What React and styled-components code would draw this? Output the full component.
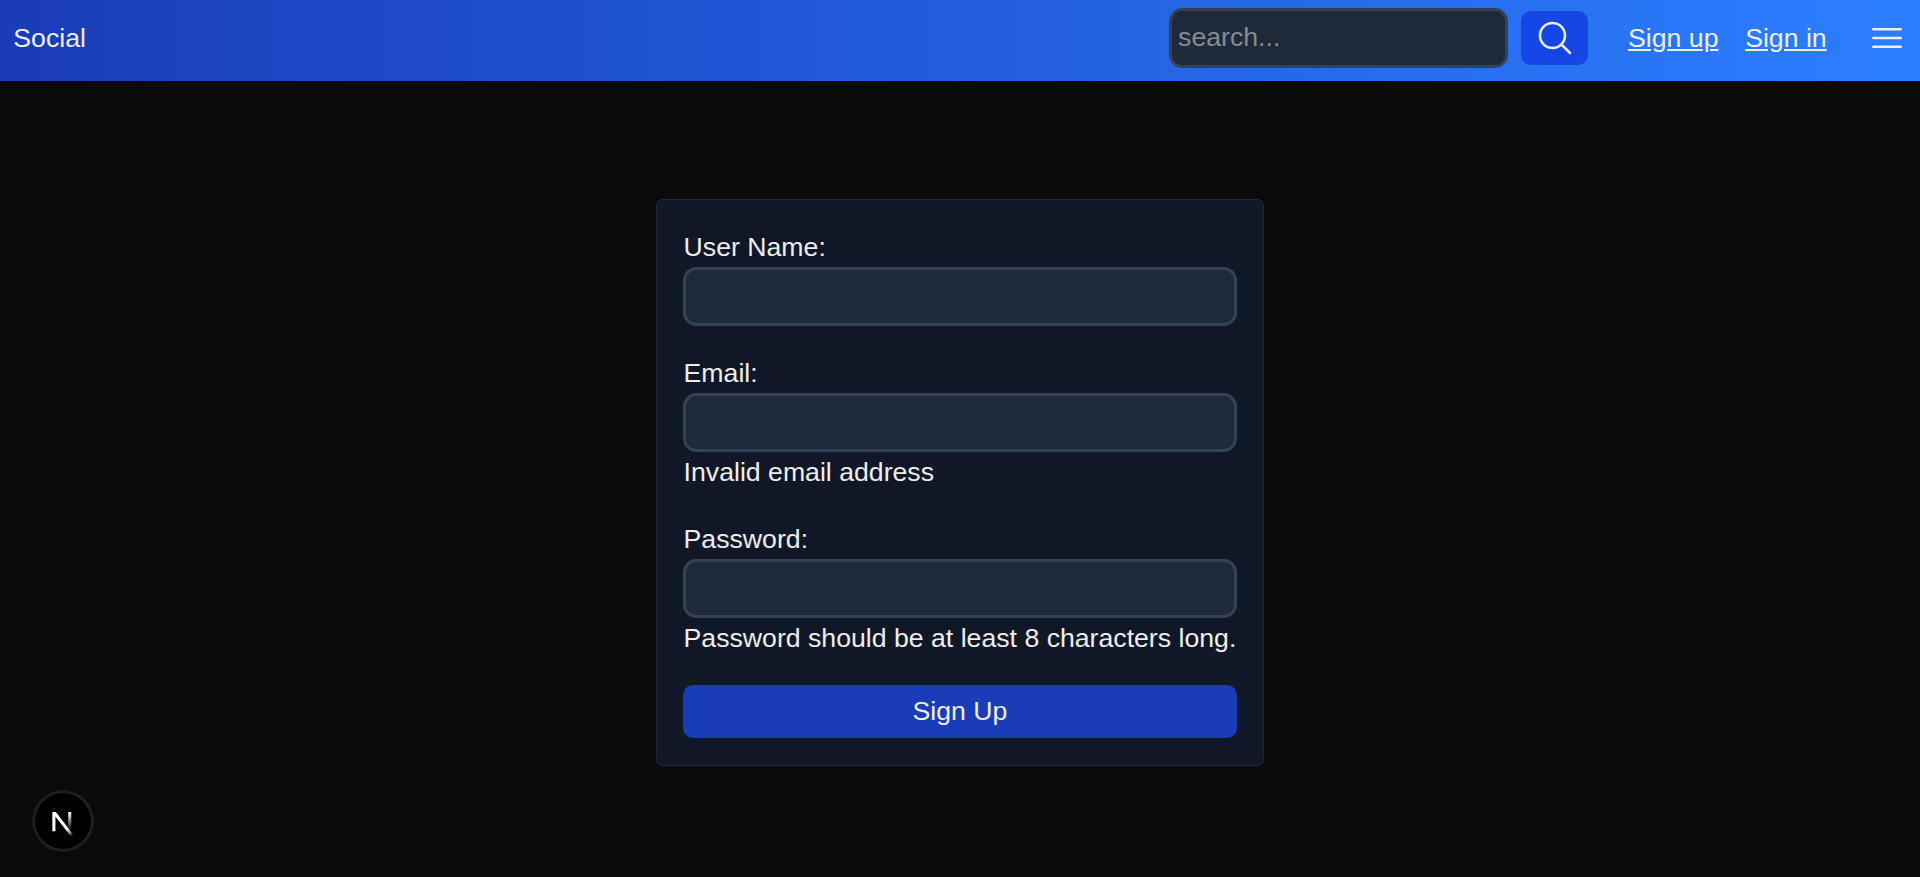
import React from "react";
import styled, { createGlobalStyle } from "styled-components";

const GlobalStyle = createGlobalStyle`
  *, *::before, *::after { box-sizing: border-box; }
  body {
    margin: 0;
    background: #0a0a0a;
    color: #ededed;
    font-family: "Liberation Sans", Arial, Helvetica, sans-serif;
    font-size: 26.667px;
    line-height: 40px;
  }
  input, button { font: inherit; color: inherit; margin: 0; }
`;

const Page = styled.div`
  min-height: 877px;
  display: flex;
  flex-direction: column;
`;

const Header = styled.header`
  height: 81px;
  padding: 8.2px 13.333px 13.333px;
  display: flex;
  align-items: center;
  justify-content: space-between;
  background: linear-gradient(to right, #193cb8, #2b7fff);
`;

const Brand = styled.span`
  display: block;
`;

const Actions = styled.div`
  display: flex;
  align-items: center;
  gap: 40px;
`;

const SearchForm = styled.form`
  display: flex;
  align-items: center;
  gap: 13.333px;
`;

const Input = styled.input`
  display: block;
  width: ${(p) => p.$width || "100%"};
  height: 59.333px;
  padding: 6.667px 6px;
  border: 3px solid #364153;
  border-radius: 13.333px;
  background: #1e2939;
  outline: none;
  &::placeholder { color: rgba(237, 237, 237, 0.5); opacity: 1; }
`;

const Button = styled.button`
  display: flex;
  align-items: center;
  justify-content: center;
  height: ${(p) => (p.$primary ? "53.333px" : "54px")};
  padding: 6.667px 13.333px;
  border: 0;
  border-radius: 10px;
  background: ${(p) => (p.$primary ? "#193cb8" : "#1447e6")};
  cursor: pointer;
`;

const Nav = styled.nav`
  display: flex;
  gap: 26.667px;
`;

const NavLink = styled.a`
  color: inherit;
  text-decoration: underline;
`;

const Icon = styled.svg`
  display: block;
  width: 40px;
  height: 40px;
  fill: none;
  stroke: currentColor;
  stroke-width: 1.5;
  stroke-linecap: round;
  stroke-linejoin: round;
`;

const Main = styled.main`
  display: flex;
  justify-content: center;
  align-items: flex-start;
  padding-top: 118px;
`;

const Card = styled.form`
  width: 608px;
  padding: 26.667px 26px;
  display: flex;
  flex-direction: column;
  gap: 26.667px;
  border: 1px solid #1e2939;
  border-radius: 6.667px;
  background: #101828;
`;

const Field = styled.div`
  display: flex;
  flex-direction: column;
`;

const Label = styled.label`
  display: block;
  padding-left: 0.6px;
`;

const Message = styled.p`
  margin: 0;
  padding-left: 0.6px;
  white-space: nowrap;
`;

const DevBadge = styled.div`
  position: fixed;
  left: 32px;
  top: 790px;
  width: 62px;
  height: 62px;
  border-radius: 50%;
  background: #000;
  box-shadow: inset 0 0 0 1px #171717, inset 0 0 0 3px #212121;
`;

const BadgeMark = styled.svg`
  display: block;
  width: 62px;
  height: 62px;
  fill: none;
`;

const fields = [
  { id: "username", label: "User Name:", type: "text" },
  { id: "email", label: "Email:", type: "email", message: "Invalid email address" },
  {
    id: "password",
    label: "Password:",
    type: "password",
    message: "Password should be at least 8 characters long.",
  },
];

export default function App() {
  return (
    <Page>
      <GlobalStyle />
      <Header>
        <Brand>Social</Brand>
        <Actions>
          <SearchForm>
            <Input $width="339px" placeholder="search..." />
            <Button type="button" aria-label="Search">
              <Icon viewBox="0 0 24 24">
                <path d="m21 21-5.197-5.197m0 0A7.5 7.5 0 1 0 5.196 5.196a7.5 7.5 0 0 0 10.607 10.607Z" />
              </Icon>
            </Button>
          </SearchForm>
          <Nav>
            <NavLink href="#">Sign up</NavLink>
            <NavLink href="#">Sign in</NavLink>
          </Nav>
          <Icon viewBox="0 0 24 24">
            <path d="M3.75 6.75h16.5M3.75 12h16.5m-16.5 5.25h16.5" />
          </Icon>
        </Actions>
      </Header>
      <Main>
        <Card>
          {fields.map((f) => (
            <Field key={f.id}>
              <Label htmlFor={f.id}>{f.label}</Label>
              <Input id={f.id} type={f.type} />
              {f.message && <Message>{f.message}</Message>}
            </Field>
          ))}
          <Button $primary type="button">Sign Up</Button>
        </Card>
      </Main>
      <DevBadge>
        <BadgeMark viewBox="0 0 62 62">
          <defs>
            <linearGradient id="diagonal" x1="9.95" y1="11.1" x2="13.3" y2="15.3" gradientUnits="userSpaceOnUse">
              <stop stopColor="#fff" />
              <stop offset="0.6" stopColor="#fff" stopOpacity="0.5" />
              <stop offset="1" stopColor="#fff" stopOpacity="0" />
            </linearGradient>
            <linearGradient id="stem" x1="11.8" y1="1" x2="11.8" y2="12" gradientUnits="userSpaceOnUse">
              <stop stopColor="#fff" />
              <stop offset="1" stopColor="#fff" stopOpacity="0" />
            </linearGradient>
            <clipPath id="mark">
              <rect x="0" y="1" width="15" height="16" />
            </clipPath>
          </defs>
          <g transform="translate(18 20.3) scale(1.6667)" strokeWidth="1.86">
            <g clipPath="url(#mark)">
              <path d="M13.3 15.2 L2.34 1 V12.6" stroke="url(#diagonal)" />
              <path d="M11.825 1 V13.1" stroke="url(#stem)" />
            </g>
            <path d="M1.5 -0.7 H3" stroke="#fff" strokeOpacity="0.35" strokeWidth="0.5" />
          </g>
        </BadgeMark>
      </DevBadge>
    </Page>
  );
}
